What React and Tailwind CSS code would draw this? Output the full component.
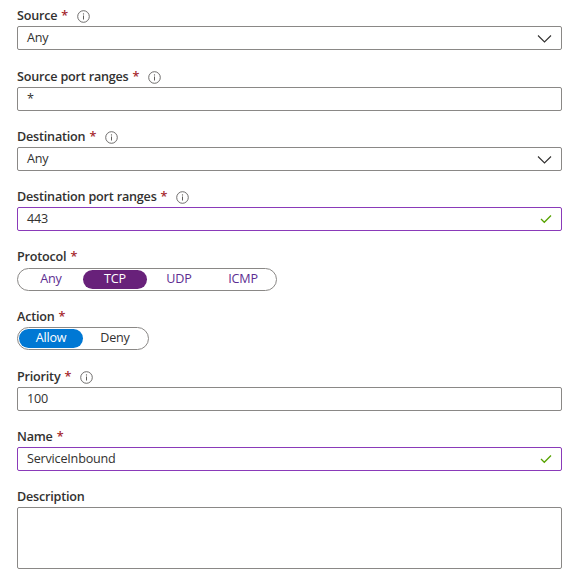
import React from 'react';

const PURPLE = 'border-[#8a3ab9]';

const InfoIcon = () => (
    <svg width="13" height="13" viewBox="0 0 13 13" className="ml-[9px] text-[#605e5c]">
        <circle cx="6.5" cy="6.5" r="5.8" fill="none" stroke="currentColor" strokeWidth="0.9" />
        <rect x="6" y="5.5" width="1" height="4" fill="currentColor" />
        <circle cx="6.5" cy="3.9" r="0.65" fill="currentColor" />
    </svg>
);

const Label = ({ text, required, info }) => (
    <div className="flex items-center h-5 text-[12.6px] font-semibold tracking-[-0.2px] text-[#323130]">
        <span>{text}</span>
        {required && <span className="ml-[4px] text-[#a4262c]">*</span>}
        {info && <InfoIcon />}
    </div>
);

const Chevron = () => (
    <svg width="15" height="9" viewBox="0 0 15 9" className="text-[#323130]">
        <path d="M1 1.5 L7.5 8 L14 1.5" fill="none" stroke="currentColor" strokeWidth="1.1" />
    </svg>
);

const Check = () => (
    <svg width="12" height="10" viewBox="0 0 12 10" className="text-[#57a300]">
        <path d="M1 5 L4.3 8.3 L11 1.5" fill="none" stroke="currentColor" strokeWidth="1.3" />
    </svg>
);

const Field = ({ value, dropdown, valid }) => (
    <div className={`flex items-center h-6 pl-[9px] pr-[9px] border rounded-[2px] bg-white text-[12.6px] tracking-[-0.2px] text-[#323130] ${valid ? PURPLE : 'border-[#8a8886]'}`}>
        <span className="flex-1">{value}</span>
        {dropdown && <Chevron />}
        {valid && <Check />}
    </div>
);

const Toggle = ({ options, selected, activeClass, textClass, className = '' }) => (
    <div className={`flex w-fit items-center h-[23px] p-[1px] border border-[#8a8886] rounded-full ${className}`}>
        {options.map((o) => (
            <div
                key={o}
                className={`w-16 h-[19px] flex items-center justify-center rounded-full text-[12.6px] tracking-[-0.2px] ${o === selected ? activeClass : textClass}`}
            >
                {o}
            </div>
        ))}
    </div>
);

const App = () => {
    return (
        <div className="w-[574px] h-[587px] bg-white pl-[17px] pr-[12px] pt-[6px]" style={{ fontFamily: '"Open Sans", "Noto Sans", sans-serif' }}>
            <div className="mb-[17px]">
                <Label text="Source" required info />
                <Field value="Any" dropdown />
            </div>
            <div className="mb-4">
                <Label text="Source port ranges" required info />
                <Field value="*" />
            </div>
            <div className="mb-4">
                <Label text="Destination" required info />
                <Field value="Any" dropdown />
            </div>
            <div className="mb-4">
                <Label text="Destination port ranges" required info />
                <Field value="443" valid />
            </div>
            <div className="mb-4">
                <Label text="Protocol" required />
                <Toggle
                    className="mt-[1px]"
                    options={['Any', 'TCP', 'UDP', 'ICMP']}
                    selected="TCP"
                    activeClass="bg-[#68217a] text-white"
                    textClass="text-[#5c2d91]"
                />
            </div>
            <div className="mb-[17px]">
                <Label text="Action" required />
                <Toggle
                    options={['Allow', 'Deny']}
                    selected="Allow"
                    activeClass="bg-[#0078d4] text-white"
                    textClass="text-[#323130]"
                />
            </div>
            <div className="mb-4">
                <Label text="Priority" required info />
                <Field value="100" />
            </div>
            <div className="mb-4">
                <Label text="Name" required />
                <Field value="ServiceInbound" valid />
            </div>
            <div>
                <Label text="Description" />
                <div className="h-[62px] border border-[#8a8886] rounded-[2px]"></div>
            </div>
        </div>
    );
};

export default App;
